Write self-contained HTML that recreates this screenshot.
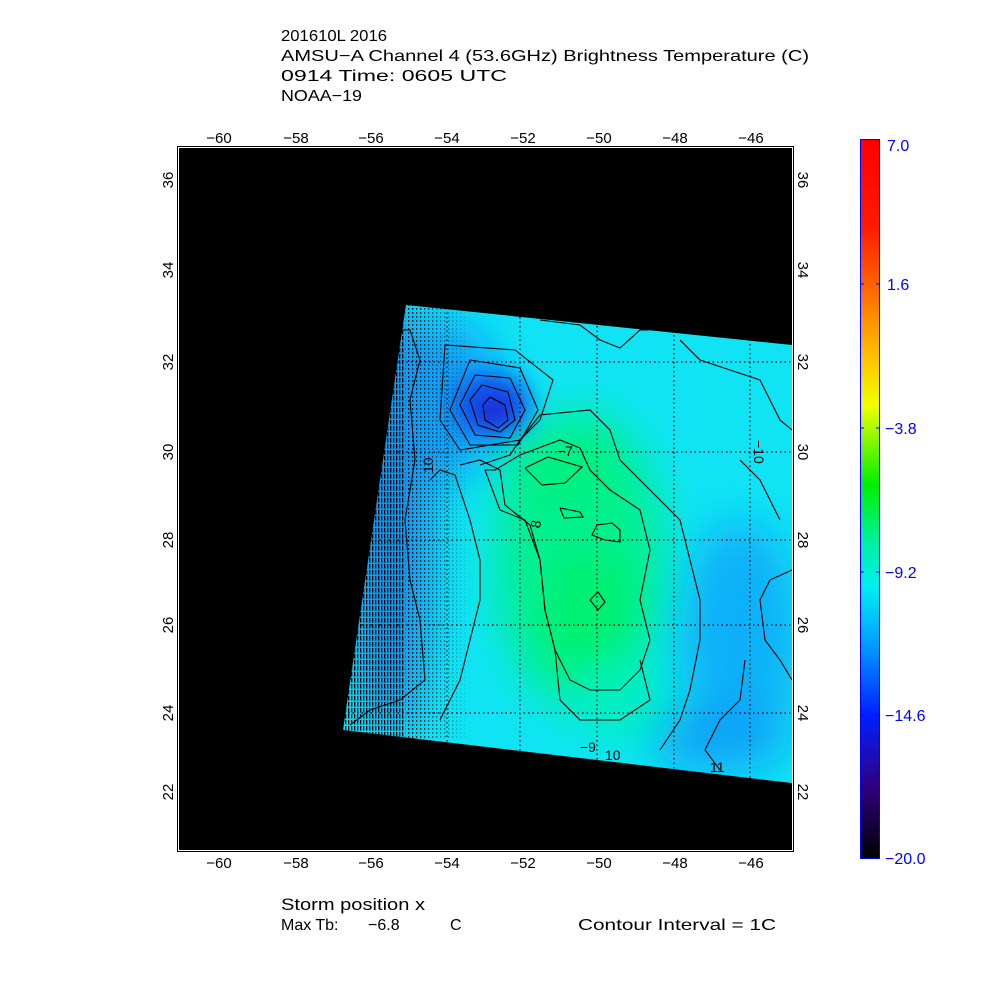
<!DOCTYPE html>
<html><head><meta charset="utf-8"><style>html,body{margin:0;padding:0;background:#fff}svg{display:block}</style></head>
<body>
<svg width="1000" height="1000" viewBox="0 0 1000 1000" xmlns="http://www.w3.org/2000/svg" font-family="Liberation Sans, sans-serif">
<defs>
<linearGradient id="cb" x1="0" y1="0" x2="0" y2="1">
<stop offset="0" stop-color="#ff0000"/>
<stop offset="0.12" stop-color="#ff1a00"/>
<stop offset="0.2" stop-color="#ff6000"/>
<stop offset="0.3" stop-color="#ffc000"/>
<stop offset="0.37" stop-color="#f0ff00"/>
<stop offset="0.48" stop-color="#00f000"/>
<stop offset="0.56" stop-color="#00f0a0"/>
<stop offset="0.62" stop-color="#00f0f0"/>
<stop offset="0.7" stop-color="#00a0ff"/>
<stop offset="0.8" stop-color="#0020ff"/>
<stop offset="0.9" stop-color="#300080"/>
<stop offset="1" stop-color="#000000"/>
</linearGradient>
<clipPath id="dc"><polygon points="406,305 792,345 792,783 343,730"/></clipPath>
<filter id="bl" x="-50%" y="-50%" width="200%" height="200%"><feGaussianBlur stdDeviation="22"/></filter>
<filter id="bl2" x="-50%" y="-50%" width="200%" height="200%"><feGaussianBlur stdDeviation="12"/></filter>
<pattern id="hat" width="3" height="6" patternUnits="userSpaceOnUse"><rect x="0" y="0" width="1.3" height="4.5" fill="#000"/></pattern>
<pattern id="hat2" width="4" height="4" patternUnits="userSpaceOnUse"><rect x="0" y="0" width="1.3" height="1.8" fill="#000"/></pattern>
<linearGradient id="hg" x1="0" y1="0" x2="1" y2="0"><stop offset="0" stop-color="#fff"/><stop offset="0.5" stop-color="#fff"/><stop offset="1" stop-color="#000"/></linearGradient>
<mask id="hm"><rect x="340" y="300" width="130" height="440" fill="url(#hg)"/></mask>
</defs>

<g font-size="16" fill="#000">
<text x="281" y="41" textLength="106" lengthAdjust="spacingAndGlyphs">201610L 2016</text>
<text x="281" y="61" textLength="528" lengthAdjust="spacingAndGlyphs">AMSU−A Channel 4 (53.6GHz) Brightness Temperature (C)</text>
<text x="281" y="81" textLength="226" lengthAdjust="spacingAndGlyphs">0914 Time: 0605 UTC</text>
<text x="281" y="101" textLength="81" lengthAdjust="spacingAndGlyphs">NOAA−19</text>
</g>

<rect x="177.5" y="146.5" width="616" height="705" fill="#fff" stroke="#000" stroke-width="1"/>
<rect x="179" y="148" width="613" height="702" fill="#000"/>

<g clip-path="url(#dc)">
<rect x="330" y="290" width="470" height="500" fill="#10e4f4"/>
<g filter="url(#bl)">
<ellipse cx="580" cy="560" rx="85" ry="150" fill="#00f090"/>
<ellipse cx="560" cy="470" rx="60" ry="40" fill="#00f080"/>
<ellipse cx="590" cy="620" rx="50" ry="70" fill="#00f070"/>
<ellipse cx="740" cy="640" rx="60" ry="120" fill="#10b0f8"/>
<ellipse cx="720" cy="740" rx="70" ry="30" fill="#10a0f8"/>
<ellipse cx="390" cy="520" rx="40" ry="220" fill="#1090f0"/>
<ellipse cx="450" cy="400" rx="50" ry="80" fill="#10a0f8"/>
<ellipse cx="620" cy="700" rx="50" ry="40" fill="#00f0c0"/>
</g>
<g filter="url(#bl2)">
<ellipse cx="492" cy="405" rx="38" ry="32" fill="#1050f0"/>
<ellipse cx="495" cy="412" rx="18" ry="14" fill="#2010d0"/>
</g>
<g mask="url(#hm)"><rect x="340" y="300" width="65" height="440" fill="url(#hat)"/><rect x="405" y="300" width="65" height="440" fill="url(#hat2)"/></g>
<g stroke="#000" stroke-width="1.2" stroke-dasharray="1.5,3">
<line x1="520" y1="290" x2="520" y2="790"/><line x1="597" y1="290" x2="597" y2="790"/><line x1="674" y1="290" x2="674" y2="790"/><line x1="750" y1="290" x2="750" y2="790"/><line x1="447" y1="290" x2="447" y2="790"/>
<line x1="330" y1="362" x2="800" y2="362"/><line x1="330" y1="452" x2="800" y2="452"/><line x1="330" y1="540" x2="800" y2="540"/><line x1="330" y1="625" x2="800" y2="625"/><line x1="330" y1="713" x2="800" y2="713"/>
</g>
<g fill="none" stroke="#000" stroke-width="1.1">
<polyline points="490,397 505,405 508,420 498,428 485,420 483,405 490,397"/>
<polyline points="482,385 508,392 515,420 500,432 478,425 470,400 482,385"/>
<polyline points="475,375 510,378 525,410 510,438 475,435 460,405 475,375"/>
<polyline points="470,360 520,368 538,410 518,445 470,445 450,410 470,360"/>
<polyline points="445,345 515,350 553,380 540,420 520,440 460,450 440,420 445,345"/>
<polyline points="480,465 510,455 520,440 540,415 590,410 610,430 620,460 660,500 680,520 690,560 700,600 700,640 690,690 680,720 660,750"/>
<polyline points="495,470 520,455 560,440 580,448 590,470 610,490 640,510 650,550 640,600 650,640 640,670 620,690 590,690 570,680 555,650 545,610 540,560 525,520 500,510 485,470 495,470"/>
<polyline points="525,468 548,457 582,467 565,483 542,485 525,468"/>
<polyline points="560,508 580,512 583,517 564,518 560,508"/>
<polyline points="597,525 612,523 620,530 620,542 605,540 592,535 597,525"/>
<polyline points="590,600 598,592 605,602 598,610 590,600"/>
<polyline points="460,465 480,460 500,470 505,505 530,525 540,560 545,610 555,650 560,700 580,720 620,720 650,700 640,660"/>
<polyline points="400,330 410,330 420,360 410,400 415,460 405,520 410,580 420,620 425,680 400,700 370,710 350,725"/>
<polyline points="540,320 580,325 600,340 620,348 640,330 660,330"/>
<polyline points="680,340 700,360 730,370 760,380 770,400 780,420 792,430"/>
<polyline points="740,460 760,480 770,500 780,520"/>
<polyline points="792,570 770,580 760,600 765,640 780,660 792,680"/>
<polyline points="745,660 740,700 720,720 705,750 720,770"/>
<polyline points="430,480 440,470 455,475 470,520 480,560 480,600 470,640 460,680 440,720"/>
</g>
<g font-size="14" fill="#000">
<text x="557" y="456">−7</text><text x="530" y="527" transform="rotate(-80 536 522)">8</text>
<text x="580" y="752">−9</text><text x="605" y="760">10</text><text x="710" y="772">11</text>
<text x="752" y="450" transform="rotate(90 758 446)">−10</text>
<text x="420" y="470" transform="rotate(-90 428 465)">10</text>
</g>
</g>

<g font-size="15" fill="#000" text-anchor="middle">
<text x="219" y="143">−60</text><text x="296" y="143">−58</text><text x="371" y="143">−56</text><text x="447" y="143">−54</text><text x="523" y="143">−52</text><text x="599" y="143">−50</text><text x="675" y="143">−48</text><text x="751" y="143">−46</text>
<text x="219" y="868">−60</text><text x="296" y="868">−58</text><text x="371" y="868">−56</text><text x="447" y="868">−54</text><text x="523" y="868">−52</text><text x="599" y="868">−50</text><text x="675" y="868">−48</text><text x="751" y="868">−46</text>
</g>
<g font-size="15" fill="#000" text-anchor="middle">
<text transform="translate(173,180) rotate(-90)">36</text>
<text transform="translate(173,270) rotate(-90)">34</text>
<text transform="translate(173,362) rotate(-90)">32</text>
<text transform="translate(173,452) rotate(-90)">30</text>
<text transform="translate(173,540) rotate(-90)">28</text>
<text transform="translate(173,625) rotate(-90)">26</text>
<text transform="translate(173,713) rotate(-90)">24</text>
<text transform="translate(173,792) rotate(-90)">22</text>
<text transform="translate(798,180) rotate(90)">36</text>
<text transform="translate(798,270) rotate(90)">34</text>
<text transform="translate(798,362) rotate(90)">32</text>
<text transform="translate(798,452) rotate(90)">30</text>
<text transform="translate(798,540) rotate(90)">28</text>
<text transform="translate(798,625) rotate(90)">26</text>
<text transform="translate(798,713) rotate(90)">24</text>
<text transform="translate(798,792) rotate(90)">22</text>
</g>

<rect x="860.5" y="139.5" width="19" height="719" fill="url(#cb)" stroke="#0000ff" stroke-width="1"/>
<g stroke="#0000ff" stroke-width="1"><line x1="860" y1="284" x2="864" y2="284"/><line x1="876" y1="284" x2="880" y2="284"/><line x1="860" y1="428" x2="864" y2="428"/><line x1="876" y1="428" x2="880" y2="428"/><line x1="860" y1="572" x2="864" y2="572"/><line x1="876" y1="572" x2="880" y2="572"/><line x1="860" y1="715" x2="864" y2="715"/><line x1="876" y1="715" x2="880" y2="715"/></g>
<g font-size="16" fill="#0000ff">
<text x="887" y="151">7.0</text><text x="887" y="290">1.6</text><text x="885" y="434">−3.8</text><text x="885" y="578">−9.2</text><text x="885" y="721">−14.6</text><text x="885" y="864">−20.0</text>
</g>

<g font-size="16" fill="#000">
<text x="281" y="910" font-size="17" textLength="144" lengthAdjust="spacingAndGlyphs">Storm position x</text>
<text x="281" y="930">Max Tb:</text>
<text x="368" y="930">−6.8</text>
<text x="450" y="930">C</text>
<text x="578" y="930" textLength="198" lengthAdjust="spacingAndGlyphs">Contour Interval = 1C</text>
</g>
</svg>
</body></html>
